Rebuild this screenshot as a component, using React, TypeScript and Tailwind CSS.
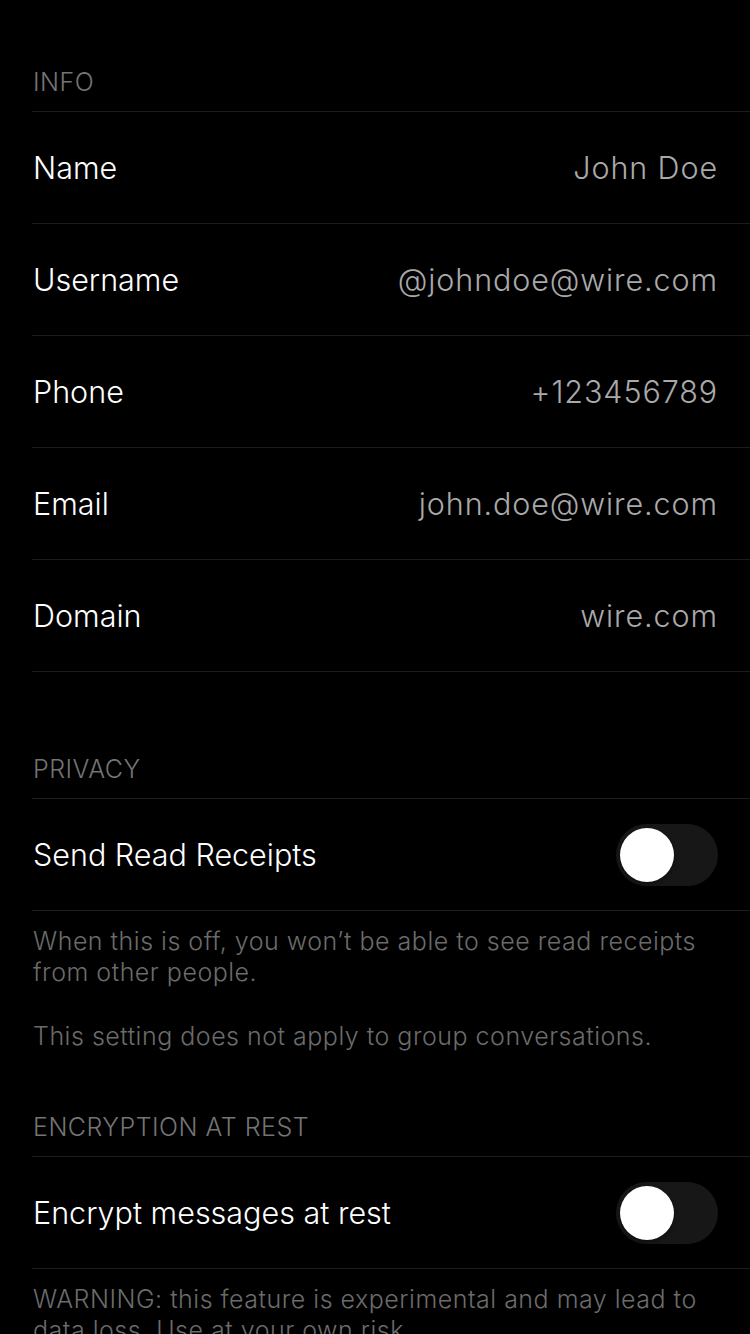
const info = [
  { label: "Name", value: "John Doe" },
  { label: "Username", value: "@johndoe@wire.com" },
  { label: "Phone", value: "+123456789" },
  { label: "Email", value: "john.doe@wire.com" },
  { label: "Domain", value: "wire.com" },
];

function SectionHeader({ title, className }: { title: string; className: string }) {
  return (
    <div
      className={`pl-[33px] pb-[14px] text-[25px] leading-[30px] tracking-[0.5px] font-light text-[#747474] ${className}`}
    >
      {title}
    </div>
  );
}

function Toggle() {
  return (
    <div className="w-[102px] h-[62px] rounded-full bg-[#171717] p-[4px] flex items-center">
      <div className="w-[54px] h-[54px] rounded-full bg-white shadow-[0_2px_4px_rgba(0,0,0,0.4)]" />
    </div>
  );
}

function Row({ label, children }: { label: string; children: React.ReactNode }) {
  return (
    <div className="h-[112px] flex items-center justify-between pl-[1px] pr-[32px] border-b border-[#1c1c1c]">
      <span className="text-[30.5px] font-light text-white">{label}</span>
      {children}
    </div>
  );
}

export default function App() {
  return (
    <div
      className="min-h-screen bg-black overflow-hidden"
      style={{ fontFamily: "Inter, Roboto, 'Liberation Sans', sans-serif" }}
    >
      <SectionHeader title="INFO" className="pt-[67px]" />
      <div className="ml-[32px] border-t border-[#1c1c1c]">
        {info.map((item) => (
          <Row key={item.label} label={item.label}>
            <span className="text-[30.5px] tracking-[0.9px] font-light text-[#a9a9a9]">
              {item.value}
            </span>
          </Row>
        ))}
      </div>

      <SectionHeader title="PRIVACY" className="pt-[82px]" />
      <div className="ml-[32px] border-t border-[#1c1c1c]">
        <Row label="Send Read Receipts">
          <Toggle />
        </Row>
      </div>
      <div className="pl-[33px] pr-[32px] pt-[15px] text-[25px] leading-[31px] tracking-[0.5px] font-light text-[#6b6b6b]">
        <p>When this is off, you won’t be able to see read receipts from other people.</p>
        <p className="mt-[33px]">This setting does not apply to group conversations.</p>
      </div>

      <SectionHeader title="ENCRYPTION AT REST" className="pt-[60px]" />
      <div className="ml-[32px] border-t border-[#1c1c1c]">
        <Row label="Encrypt messages at rest">
          <Toggle />
        </Row>
      </div>
      <div className="pl-[33px] pr-[32px] pt-[15px] text-[25px] leading-[31px] tracking-[0.5px] font-light text-[#6b6b6b]">
        <p>WARNING: this feature is experimental and may lead to data loss. Use at your own risk.</p>
      </div>
    </div>
  );
}
